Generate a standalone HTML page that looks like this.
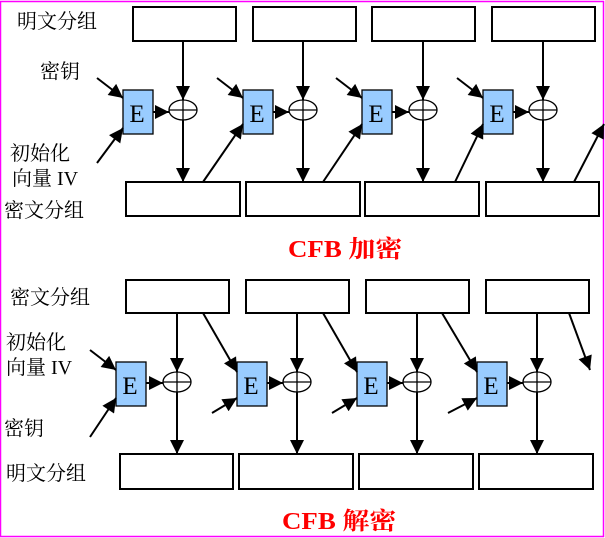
<!DOCTYPE html>
<html><head><meta charset="utf-8"><style>
html,body{margin:0;padding:0;background:#fff;}
svg{display:block;}
text{font-family:"Liberation Serif","Noto Serif CJK SC",serif;}
</style></head><body>
<svg width="605" height="538" viewBox="0 0 605 538" xmlns="http://www.w3.org/2000/svg">
<defs>
<marker id="b" viewBox="0 0 10 10" refX="10" refY="5" markerWidth="15" markerHeight="14" markerUnits="userSpaceOnUse" orient="auto"><path d="M0,0 L10,5 L0,10 z" fill="#000"/></marker>
</defs>
<rect x="0.5" y="1.5" width="603" height="535" fill="none" stroke="#f0f" stroke-width="1.5"/>
<g fill="#fff" stroke="#000" stroke-width="2">
<rect x="133" y="7" width="103" height="34"/><rect x="253" y="7" width="103" height="34"/>
<rect x="372" y="7" width="103" height="34"/><rect x="492" y="7" width="103" height="34"/>
<rect x="126" y="182" width="114" height="34"/><rect x="246" y="182" width="114" height="34"/>
<rect x="365" y="182" width="114" height="34"/><rect x="486" y="182" width="113" height="34"/>
<rect x="126" y="280" width="103" height="33"/><rect x="246" y="280" width="103" height="33"/>
<rect x="366" y="280" width="103" height="33"/><rect x="486" y="280" width="103" height="33"/>
<rect x="120" y="454" width="113" height="35"/><rect x="239" y="454" width="114" height="35"/>
<rect x="359" y="454" width="114" height="35"/><rect x="479" y="454" width="114" height="35"/>
</g>
<g fill="#99ccff" stroke="#000" stroke-width="1.3">
<rect x="123" y="90" width="30" height="44"/><rect x="243" y="90" width="30" height="44"/>
<rect x="362" y="90" width="30" height="44"/><rect x="483" y="90" width="30" height="44"/>
<rect x="116" y="362" width="30" height="44"/><rect x="237" y="362" width="30" height="44"/>
<rect x="357" y="362" width="30" height="44"/><rect x="477" y="362" width="30" height="44"/>
</g>
<g font-size="25" text-anchor="middle">
<text x="137" y="122">E</text><text x="257" y="122">E</text><text x="376" y="122">E</text><text x="497" y="122">E</text>
<text x="130" y="394">E</text><text x="251" y="394">E</text><text x="371" y="394">E</text><text x="491" y="394">E</text>
</g>
<g fill="none" stroke="#000" stroke-width="1.3">
<ellipse cx="183" cy="110" rx="14" ry="10"/><path d="M169 110H197M183 100V120"/>
<ellipse cx="303" cy="110" rx="14" ry="10"/><path d="M289 110H317M303 100V120"/>
<ellipse cx="423" cy="110" rx="14" ry="10"/><path d="M409 110H437M423 100V120"/>
<ellipse cx="543" cy="110" rx="14" ry="10"/><path d="M529 110H557M543 100V120"/>
<ellipse cx="177" cy="382" rx="14" ry="10"/><path d="M163 382H191M177 372V392"/>
<ellipse cx="297" cy="382" rx="14" ry="10"/><path d="M283 382H311M297 372V392"/>
<ellipse cx="417" cy="382" rx="14" ry="10"/><path d="M403 382H431M417 372V392"/>
<ellipse cx="537" cy="382" rx="14" ry="10"/><path d="M523 382H551M537 372V392"/>
</g>
<g stroke="#000" stroke-width="2" marker-end="url(#b)">
<path d="M183 41V100"/><path d="M183 120V182"/>
<path d="M303 41V100"/><path d="M303 120V182"/>
<path d="M423 41V100"/><path d="M423 120V182"/>
<path d="M543 41V100"/><path d="M543 120V182"/>
<path d="M153 112H169"/><path d="M273 112H289"/><path d="M392 112H409"/><path d="M513 112H529"/>
<path d="M97 78L123 98"/><path d="M217 78L243 98"/><path d="M336 78L362 98"/><path d="M457 78L483 98"/>
<path d="M97 163L123 128"/><path d="M203 182L243 124"/><path d="M323 182L362 124"/><path d="M455 182L483 124"/><path d="M574 182L604 124"/>
<path d="M177 313V372"/><path d="M177 392V454"/>
<path d="M297 313V372"/><path d="M297 392V454"/>
<path d="M417 313V372"/><path d="M417 392V454"/>
<path d="M537 313V372"/><path d="M537 392V454"/>
<path d="M146 383H163"/><path d="M267 383H283"/><path d="M387 383H403"/><path d="M507 383H523"/>
<path d="M90 350L116 370"/><path d="M203 313L237 372"/><path d="M323 313L357 372"/><path d="M442 313L477 372"/><path d="M569 313L590 370"/>
<path d="M90 437L116 398"/><path d="M212 413L237 398"/><path d="M332 413L357 398"/><path d="M448 413L477 398"/>
</g>
<g font-size="20" fill="#000">
<text x="17" y="28">明文分组</text>
<text x="40" y="78">密钥</text>
<text x="10" y="160">初始化</text>
<text x="12" y="185">向量 IV</text>
<text x="4" y="217">密文分组</text>
<text x="10" y="304">密文分组</text>
<text x="6" y="349">初始化</text>
<text x="6" y="374">向量 IV</text>
<text x="4" y="435">密钥</text>
<text x="6" y="480">明文分组</text>
</g>
<g font-size="24" font-weight="bold" fill="#ff0000">
<text transform="translate(288,257) scale(1.12,1)">CFB 加密</text>
<text transform="translate(282,529) scale(1.12,1)">CFB 解密</text>
</g>
</svg>
</body></html>
